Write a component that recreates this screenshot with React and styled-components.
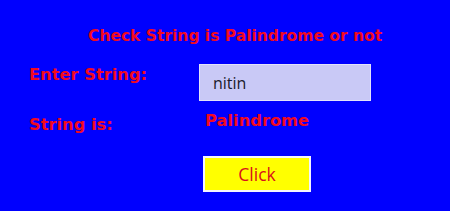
import React, { useState } from "react";
import styled, { createGlobalStyle } from "styled-components";

const GlobalStyle = createGlobalStyle`
  html, body {
    margin: 0;
    padding: 0;
    background: #0000fe;
  }
`;

const Page = styled.div`
  width: 450px;
  height: 211px;
  background: #0000fe;
  box-sizing: border-box;
  padding: 27px 0 0 29px;
  font-family: "DejaVu Sans", "Liberation Sans", sans-serif;
  font-weight: 700;
  color: #f20a1e;
  overflow: hidden;
`;

const Title = styled.h1`
  margin: 0 0 0 59px;
  font-size: 15.5px;
  line-height: 18px;
  font-weight: 700;
  white-space: nowrap;
`;

const Form = styled.div`
  display: grid;
  grid-template-columns: 170px 172px;
  grid-template-rows: 37px 42px;
  row-gap: 10px;
  margin-top: 19px;
`;

const Label = styled.label`
  font-size: 16.3px;
  line-height: 20px;
  padding-top: ${(p) => p.$top || 0}px;
  white-space: nowrap;
`;

const Input = styled.input`
  box-sizing: border-box;
  width: 172px;
  height: 37px;
  margin: 0;
  padding: 0 0 0 13px;
  border: 1px solid #e2e2fb;
  background: #c9c9f6;
  font-family: "Open Sans", "Noto Sans", sans-serif;
  font-size: 16px;
  color: #1a1a2a;
  outline: none;
`;

const Result = styled.div`
  font-size: 16.3px;
  line-height: 20px;
  padding-left: 6px;
`;

const ButtonRow = styled.div`
  display: flex;
  padding-left: 174px;
  margin-top: 3px;
`;

const Button = styled.button`
  box-sizing: border-box;
  width: 108px;
  height: 36px;
  background: #ffff00;
  border: 2px solid #f4f4ff;
  color: #d8101c;
  font-family: "Open Sans", "Noto Sans", sans-serif;
  font-size: 17.5px;
  cursor: pointer;
  padding: 0;
`;

export default function App() {
  const [value, setValue] = useState("nitin");
  const [result, setResult] = useState("Palindrome");

  const check = () => {
    const s = value;
    setResult(s === s.split("").reverse().join("") ? "Palindrome" : "Not Palindrome");
  };

  return (
    <>
      <GlobalStyle />
      <Page>
        <Title>Check String is Palindrome or not</Title>
        <Form>
          <Label $top={1}>Enter String:</Label>
          <Input value={value} onChange={(e) => setValue(e.target.value)} />
          <Label $top={4}>String is:</Label>
          <Result>{result}</Result>
        </Form>
        <ButtonRow>
          <Button onClick={check}>Click</Button>
        </ButtonRow>
      </Page>
    </>
  );
}
